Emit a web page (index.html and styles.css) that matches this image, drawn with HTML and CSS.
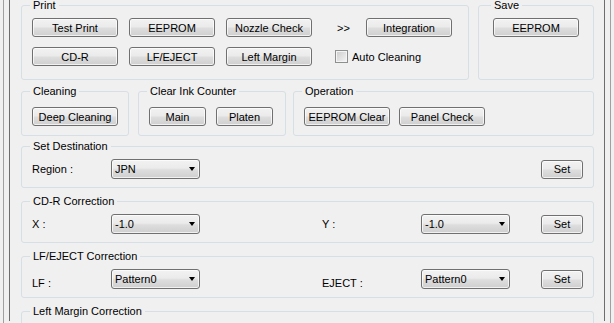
FILE: index.html
```html
<!DOCTYPE html>
<html lang="ja">
<head>
  <meta charset="UTF-8" />
  <meta name="viewport" content="width=device-width, initial-scale=1.0" />
  <title>Maintenance</title>
  <link rel="stylesheet" href="styles.css">
</head>
<body>
  <div class="frame">
    <div class="panel">
      <div class="row row-top">
        <fieldset class="group group-print">
          <legend>Print</legend>
          <div class="print-grid">
            <button>Test Print</button>
            <button>EEPROM</button>
            <button>Nozzle Check</button>
            <span class="more">&gt;&gt;</span>
            <button>Integration</button>
            <button>CD-R</button>
            <button>LF/EJECT</button>
            <button>Left Margin</button>
            <label class="check"><span class="box"></span>Auto Cleaning</label>
          </div>
        </fieldset>
        <fieldset class="group group-save">
          <legend>Save</legend>
          <button>EEPROM</button>
        </fieldset>
      </div>

      <div class="row row-mid">
        <fieldset class="group group-clean">
          <legend>Cleaning</legend>
          <button>Deep Cleaning</button>
        </fieldset>
        <fieldset class="group group-ink">
          <legend>Clear Ink Counter</legend>
          <div class="btns">
            <button class="small">Main</button>
            <button class="small">Platen</button>
          </div>
        </fieldset>
        <fieldset class="group group-op">
          <legend>Operation</legend>
          <div class="btns">
            <button>EEPROM Clear</button>
            <button>Panel Check</button>
          </div>
        </fieldset>
      </div>

      <fieldset class="group setting first">
        <legend>Set Destination</legend>
        <div class="field-grid">
          <span class="lbl">Region :</span>
          <div class="combo"><span>JPN</span><i class="arrow"></i></div>
          <button class="btn-set">Set</button>
        </div>
      </fieldset>

      <fieldset class="group setting">
        <legend>CD-R Correction</legend>
        <div class="field-grid">
          <span class="lbl">X :</span>
          <div class="combo"><span>-1.0</span><i class="arrow"></i></div>
          <span class="lbl second">Y :</span>
          <div class="combo"><span>-1.0</span><i class="arrow"></i></div>
          <button class="btn-set">Set</button>
        </div>
      </fieldset>

      <fieldset class="group setting">
        <legend>LF/EJECT Correction</legend>
        <div class="field-grid low">
          <span class="lbl">LF :</span>
          <div class="combo"><span>Pattern0</span><i class="arrow"></i></div>
          <span class="lbl second">EJECT :</span>
          <div class="combo"><span>Pattern0</span><i class="arrow"></i></div>
          <button class="btn-set">Set</button>
        </div>
      </fieldset>

      <fieldset class="group setting">
        <legend>Left Margin Correction</legend>
        <div class="field-grid"></div>
      </fieldset>
    </div>
  </div>
</body>
</html>
```

FILE: styles.css
```css
* {
  box-sizing: border-box;
}
body {
  margin: 0;
  background: #f0f0f0;
  font: 11px "Liberation Sans", Arial, sans-serif;
  color: #000;
  overflow: hidden;
}
.frame {
  height: 323px;
  margin: 0 3px;
  padding: 0 5px;
  border-left: 1px solid #a0a0a0;
  border-right: 1px solid #a0a0a0;
  overflow: hidden;
}
.panel {
  height: 100%;
  padding: 0 10px 0 11px;
  border-left: 1px solid #6d6d6d;
  border-right: 1px solid #6d6d6d;
}
.row {
  display: flex;
}
.row-top {
  margin-top: -2px;
  gap: 9px;
}
.row-mid {
  margin-top: 4px;
}

/* group boxes */
.group {
  margin: 0;
  min-width: 0;
  padding: 6px 10px 8px;
  border: 1px solid #d5dfe5;
  border-radius: 3px;
}
.group legend {
  margin-left: -2px;
  padding: 0 3px;
  line-height: 14px;
}
.group-print {
  width: 448px;
  padding: 6px 10px 13px;
}
.group-save {
  flex: 1;
  padding: 6px 0 13px 14px;
}
.group-clean,
.group-ink,
.group-op {
  padding: 9px 10px 9px;
}
.group-clean {
  width: 108px;
  margin-right: 9px;
}
.group-ink {
  width: 148px;
  margin-right: 7px;
}
.group-op {
  flex: 1;
}
.setting {
  margin-top: 6px;
}
.setting.first {
  margin-top: 3px;
}

/* buttons */
button {
  width: 86px;
  height: 19px;
  padding: 0;
  font: inherit;
  color: #000;
  border: 1px solid #707070;
  border-radius: 3px;
  background: linear-gradient(#f2f2f2 0%, #ebebeb 45%, #dddddd 55%, #cfcfcf 100%);
  box-shadow: inset 0 0 0 1px rgba(255, 255, 255, 0.7);
}
button.small {
  width: 57px;
}
.btns {
  display: flex;
  gap: 9px;
}
.group-ink .btns {
  gap: 10px;
}

.print-grid {
  display: grid;
  grid-template-columns: 86px 86px 86px 32px 86px;
  column-gap: 11px;
  row-gap: 10px;
  align-items: center;
}
.more {
  padding-left: 14px;
}
.check {
  grid-column: 4 / span 2;
  display: flex;
  align-items: center;
  gap: 4px;
  padding-left: 12px;
}
.box {
  width: 13px;
  height: 13px;
  border: 1px solid #8e8f8f;
  background: linear-gradient(135deg, #cbcbcb, #f6f6f6);
  box-shadow: inset 0 0 0 1px #f4f4f4;
}

/* selectors */
.field-grid {
  display: grid;
  grid-template-columns: 79px 89px 1fr 99px 89px 73px;
  align-items: center;
  height: 20px;
}
.field-grid .lbl.second {
  grid-column: 4;
}
.field-grid .btn-set {
  grid-column: 6;
  width: 42px;
  justify-self: end;
}
.field-grid.low .lbl {
  padding-top: 8px;
}
.combo {
  display: flex;
  align-items: center;
  justify-content: space-between;
  height: 20px;
  padding: 0 4px 0 3px;
  border: 1px solid #707070;
  border-radius: 3px;
  background: linear-gradient(#f2f2f2 0%, #ebebeb 45%, #dddddd 55%, #cfcfcf 100%);
  box-shadow: inset 0 0 0 1px rgba(255, 255, 255, 0.7);
}
.arrow {
  width: 0;
  height: 0;
  border-top: 4px solid #000;
  border-left: 3.5px solid transparent;
  border-right: 3.5px solid transparent;
}
```
